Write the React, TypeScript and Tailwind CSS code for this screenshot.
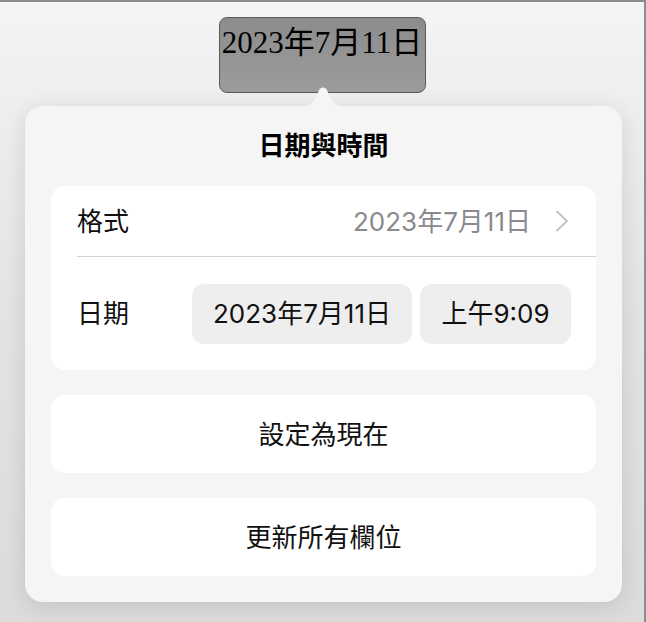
import React from 'react';

const sans = "font-['Inter','Noto_Sans_CJK_TC',sans-serif]";

// Chevron used on disclosure rows
function Chevron() {
    return (
        <svg width="14" height="22" viewBox="0 0 14 22" fill="none">
            <path d="M2 1.5 L12 11 L2 20.5" stroke="#c4c4c7" strokeWidth="2" strokeLinecap="round" strokeLinejoin="round" />
        </svg>
    );
}

function ActionButton({ label }: { label: string }) {
    return (
        <button className="flex h-[78px] w-full items-center justify-center rounded-[14px] bg-white text-[26px] text-[#111]">
            {label}
        </button>
    );
}

export default function App() {
    return (
        <div className={`relative h-[622px] w-[646px] overflow-hidden border-t-2 border-r-2 border-[#8c8c8c] bg-gradient-to-b from-[#f4f4f4] via-[#e4e4e4] to-[#dcdcdc] ${sans}`}>
            {/* Field being edited */}
            <div className="mx-auto mt-[15px] h-[76px] w-[207px] rounded-[8px] border border-[#5a5a5a] bg-gradient-to-b from-[#8c8c8c] to-[#9c9c9c] pt-[3px] text-center font-['Liberation_Serif','Noto_Sans_CJK_TC',serif] text-[31px] leading-[44px] text-black">
                2023年7月11日
            </div>

            {/* Popover */}
            <div className="relative ml-[25px] mt-[13px] w-[597px] rounded-[18px] bg-[#f5f5f5] px-[26px] pb-[26px] shadow-[0_4px_24px_rgba(0,0,0,0.12)]">
                {/* Arrow */}
                <svg className="absolute left-[273px] top-[-20px]" width="50" height="21" viewBox="0 0 50 21">
                    <path d="M0 21 C10 21 14 18 18 12 L21 4 C22.5 0.5 27.5 0.5 29 4 L32 12 C36 18 40 21 50 21 Z" fill="#f5f5f5" />
                </svg>

                <div className="flex h-[80px] items-center justify-center pb-[2px] text-[26px] font-bold text-black">
                    日期與時間
                </div>

                <div className="rounded-[14px] bg-white">
                    <div className="flex h-[70px] items-center pl-[26px] pr-[27px] text-[26px]">
                        <span className="text-[#111]">格式</span>
                        <span className="ml-auto mr-[24px] text-[#8a8a8e]">2023年7月11日</span>
                        <Chevron />
                    </div>
                    <div className="ml-[26px] h-px bg-[#d1d1d4]" />
                    <div className="flex h-[113px] items-center pl-[26px] pr-[25px] text-[26px] text-[#111]">
                        <span>日期</span>
                        <div className="ml-auto flex gap-[8px]">
                            <div className="flex h-[60px] w-[220px] items-center justify-center rounded-[12px] bg-[#eeeeef]">
                                2023年7月11日
                            </div>
                            <div className="flex h-[60px] w-[151px] items-center justify-center rounded-[12px] bg-[#eeeeef]">
                                上午9:09
                            </div>
                        </div>
                    </div>
                </div>

                <div className="mt-[25px] flex flex-col gap-[25px]">
                    <ActionButton label="設定為現在" />
                    <ActionButton label="更新所有欄位" />
                </div>
            </div>
        </div>
    );
}
